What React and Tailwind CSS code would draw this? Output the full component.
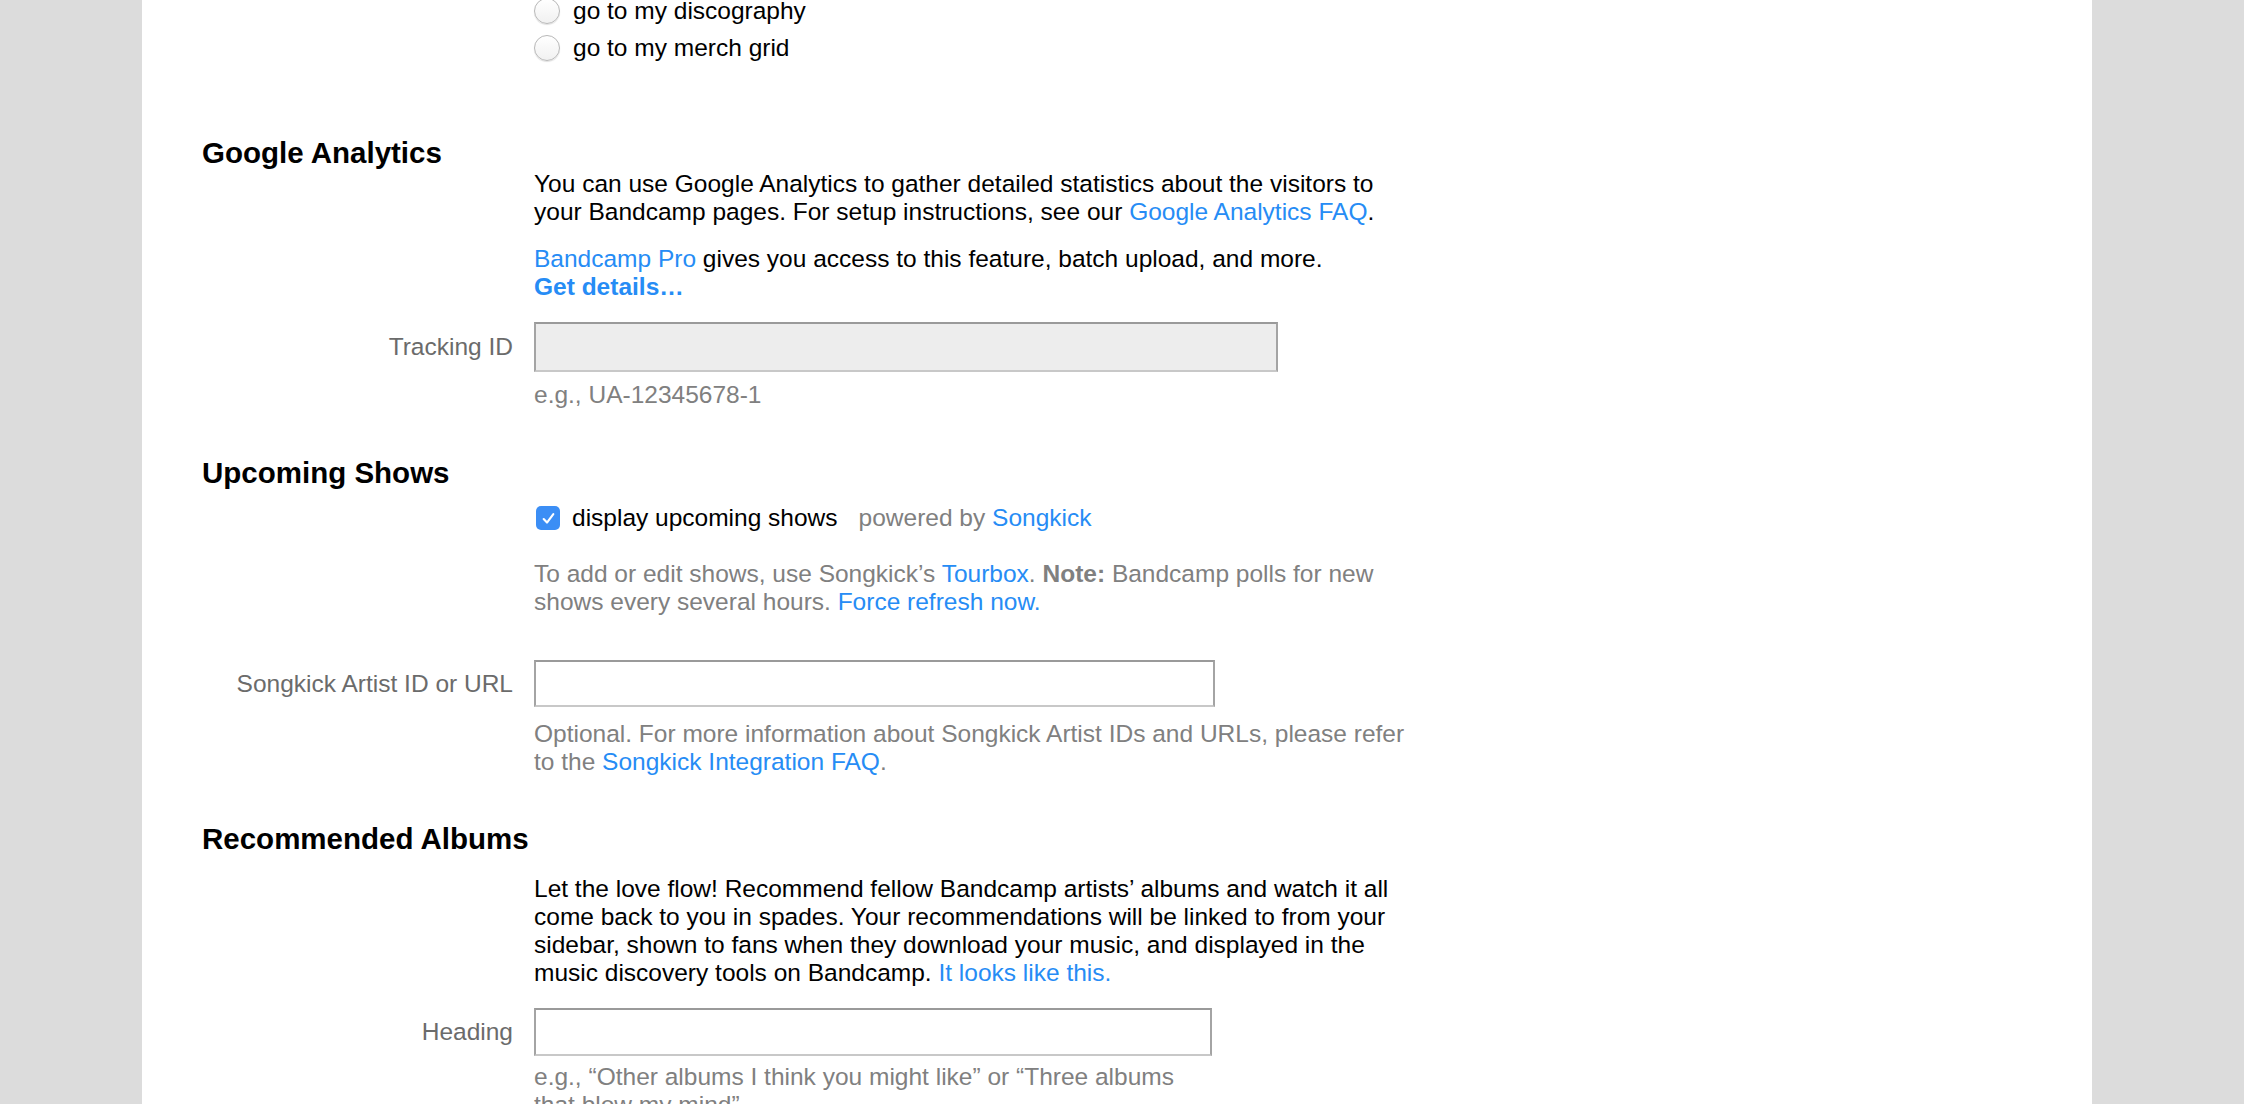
import React from "react";

const link = "text-[#268cf5]";

function Row({ label, children, className = "" }) {
  return (
    <div className={`flex items-center ${className}`}>
      <div className="w-[392px] shrink-0 pr-[21px] text-right text-[#6b6b6b]">{label}</div>
      <div className="min-w-0">{children}</div>
    </div>
  );
}

function Radio({ label }) {
  return (
    <div className="flex h-[37px] items-center">
      <div className="w-[392px] shrink-0" />
      <span className="h-[26px] w-[26px] shrink-0 rounded-full border border-[#b8b8b8] bg-gradient-to-b from-white to-[#f1f1f1] shadow-[0_1px_1px_rgba(0,0,0,0.12)]" />
      <span className="ml-[13px]">{label}</span>
    </div>
  );
}

function Heading({ children, className = "" }) {
  return (
    <h2 className={`pl-[60px] text-[29.5px] font-bold leading-[34px] text-black ${className}`}>
      {children}
    </h2>
  );
}

function TextInput({ className = "", disabled = false }) {
  return (
    <input
      type="text"
      disabled={disabled}
      className={`block border-2 border-[#a4a4a4] border-t-[#9a9a9a] border-b-[#c8c8c8] outline-none ${
        disabled ? "bg-[#ededed]" : "bg-white"
      } ${className}`}
    />
  );
}

export default function App() {
  return (
    <div className="min-h-screen bg-[#dcdcdc] font-['Liberation_Sans',Arial,sans-serif] text-[24.5px] leading-[28px] text-black">
      <div className="ml-[142px] w-[1950px] min-h-screen overflow-hidden bg-white pb-[80px]">
        {/* landing page radios (scrolled) */}
        <div className="mt-[-8px]">
          <Radio label="go to my discography" />
          <Radio label="go to my merch grid" />
        </div>

        {/* Google Analytics */}
        <Heading className="mt-[70px]">Google Analytics</Heading>
        <Row>
          <p>
            You can use Google Analytics to gather detailed statistics about the visitors to
            <br />
            your Bandcamp pages. For setup instructions, see our{" "}
            <a className={link}>Google Analytics FAQ</a>.
          </p>
        </Row>
        <Row className="mt-[19px]">
          <p>
            <a className={link}>Bandcamp Pro</a> gives you access to this feature, batch upload, and more.
            <br />
            <a className={`${link} font-bold`}>Get details…</a>
          </p>
        </Row>
        <Row label="Tracking ID" className="mt-[21px]">
          <TextInput disabled className="h-[50px] w-[744px]" />
        </Row>
        <Row className="mt-[9px]">
          <p className="text-[#808080]">e.g., UA-12345678-1</p>
        </Row>

        {/* Upcoming Shows */}
        <Heading className="mt-[47px]">Upcoming Shows</Heading>
        <Row className="mt-[14px]">
          <div className="flex h-[28px] items-center">
            <span className="ml-[2px] flex h-[24px] w-[24px] items-center justify-center rounded-[5px] bg-[#3b8ef5]">
              <svg width="15" height="15" viewBox="0 0 14 14" fill="none">
                <path d="M2.5 7.5 L5.6 10.8 L11.5 3" stroke="white" strokeWidth="2" strokeLinecap="round" strokeLinejoin="round" />
              </svg>
            </span>
            <span className="ml-[12px]">display upcoming shows</span>
            <span className="ml-[21px] text-[#808080]">
              powered by <a className={link}>Songkick</a>
            </span>
          </div>
        </Row>
        <Row className="mt-[28px]">
          <p className="text-[#808080]">
            To add or edit shows, use Songkick’s <a className={link}>Tourbox</a>.{" "}
            <b className="font-bold">Note:</b> Bandcamp polls for new
            <br />
            shows every several hours. <a className={link}>Force refresh now.</a>
          </p>
        </Row>
        <Row label="Songkick Artist ID or URL" className="mt-[44px]">
          <TextInput className="h-[47px] w-[681px]" />
        </Row>
        <Row className="mt-[13px]">
          <p className="text-[#808080]">
            Optional. For more information about Songkick Artist IDs and URLs, please refer
            <br />
            to the <a className={link}>Songkick Integration FAQ</a>.
          </p>
        </Row>

        {/* Recommended Albums */}
        <Heading className="mt-[46px]">Recommended Albums</Heading>
        <Row className="mt-[19px]">
          <p>
            Let the love flow! Recommend fellow Bandcamp artists’ albums and watch it all
            <br />
            come back to you in spades. Your recommendations will be linked to from your
            <br />
            sidebar, shown to fans when they download your music, and displayed in the
            <br />
            music discovery tools on Bandcamp. <a className={link}>It looks like this.</a>
          </p>
        </Row>
        <Row label="Heading" className="mt-[21px]">
          <TextInput className="h-[48px] w-[678px]" />
        </Row>
        <Row className="mt-[7px]">
          <p className="text-[#808080]">
            e.g., “Other albums I think you might like” or “Three albums
            <br />
            that blow my mind”
          </p>
        </Row>
      </div>
    </div>
  );
}
